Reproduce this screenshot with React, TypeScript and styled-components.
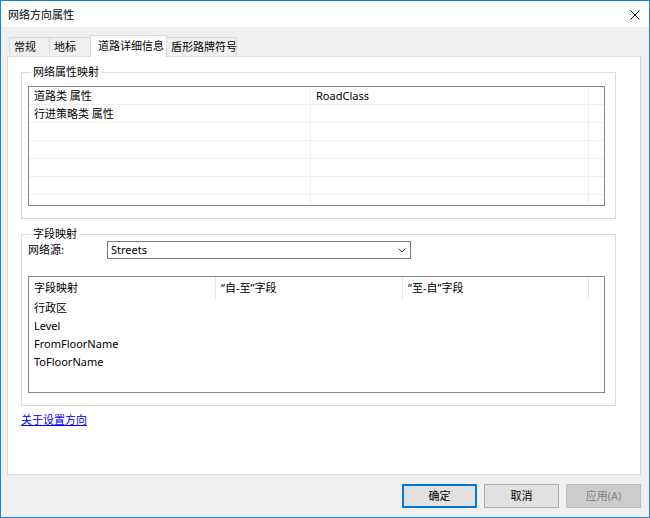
import { Fragment } from "react";
import styled, { createGlobalStyle } from "styled-components";

/* ================= STYLES ================= */

const GlobalStyle = createGlobalStyle`
  html, body {
    margin: 0;
    padding: 0;
    background: #ffffff;
  }
  body {
    font-family: "Noto Sans", "Noto Sans CJK SC", sans-serif;
    font-size: 11px;
    color: #000;
  }
  * {
    box-sizing: border-box;
  }
`;

const Window = styled.div`
  width: 650px;
  height: 518px;
  border: 1px solid #1883d7;
  background: #f0f0f0;
  display: flex;
  flex-direction: column;
`;

const TitleBar = styled.div`
  height: 26px;
  flex-shrink: 0;
  background: #ffffff;
  display: flex;
  align-items: center;
  justify-content: space-between;
  padding: 1px 9px 0 7px;
  line-height: 14px;
`;

const CloseIcon = styled.svg`
  display: block;
`;

const Body = styled.div`
  flex: 1;
  min-height: 0;
  display: flex;
  flex-direction: column;
  padding: 8px 8px 9px 6px;
`;

const TabStrip = styled.div`
  height: 21px;
  flex-shrink: 0;
  display: flex;
  align-items: flex-end;
  padding-left: 2px;
  position: relative;
  z-index: 1;
`;

const Tab = styled.div<{ $active?: boolean; $w: number }>`
  width: ${({ $w }) => $w}px;
  height: ${({ $active }) => ($active ? 22 : 19)}px;
  margin-bottom: ${({ $active }) => ($active ? -1 : 0)}px;
  margin-left: -1px;
  padding: 0 0 ${({ $active }) => ($active ? 2 : 0)}px
    ${({ $active }) => ($active ? 7 : 4)}px;
  border: 1px solid #d9d9d9;
  border-bottom: none;
  background: ${({ $active }) => ($active ? "#ffffff" : "#f0f0f0")};
  display: flex;
  align-items: center;
  line-height: 14px;
  white-space: nowrap;
  position: relative;
  z-index: ${({ $active }) => ($active ? 2 : 1)};

  &:first-child {
    margin-left: 0;
  }
`;

const Panel = styled.div`
  flex: 1;
  min-height: 0;
  background: #ffffff;
  border: 1px solid #d9d9d9;
  padding: 8px 24px 0 13px;
  display: flex;
  flex-direction: column;
`;

const Group = styled.fieldset`
  margin: 0;
  padding: 0 10px 12px 6px;
  border: 1px solid #dcdcdc;
  min-width: 0;

  & + & {
    margin-top: 8px;
  }
`;

const Legend = styled.legend`
  padding: 0 2px;
  margin-left: 3px;
  line-height: 14px;
  height: 14px;
`;

const ListBox = styled.div<{ $h: number; $mt: number }>`
  height: ${({ $h }) => $h}px;
  margin-top: ${({ $mt }) => $mt}px;
  border: 1px solid #828790;
  background: #ffffff;
  overflow: hidden;
`;

const GridTable = styled.div`
  display: grid;
  grid-template-columns: 282px 278px 1fr;
  grid-auto-rows: 18px;
`;

const GridCell = styled.div<{ $last?: boolean }>`
  border-bottom: 1px solid #f0f0f0;
  border-right: ${({ $last }) => ($last ? "none" : "1px solid #f0f0f0")};
  padding-left: 5px;
  display: flex;
  align-items: center;
  line-height: 14px;
  white-space: nowrap;
`;

const HeaderRow = styled.div`
  display: grid;
  grid-template-columns: 187px 187px 186px 1fr;
  height: 22px;
`;

const HeaderCell = styled.div<{ $last?: boolean }>`
  border-right: ${({ $last }) => ($last ? "none" : "1px solid #e5e5e5")};
  padding-left: 5px;
  display: flex;
  align-items: center;
  line-height: 14px;
  white-space: nowrap;
`;

const PlainRow = styled.div`
  height: 18px;
  padding-left: 5px;
  display: flex;
  align-items: center;
  line-height: 14px;
`;

const SourceRow = styled.div`
  height: 18px;
  display: flex;
  align-items: center;
`;

const SourceLabel = styled.span`
  width: 79px;
  line-height: 14px;
`;

const Combo = styled.div`
  width: 304px;
  height: 18px;
  border: 1px solid #7a7a7a;
  background: #ffffff;
  display: flex;
  align-items: center;
  justify-content: space-between;
  padding: 0 4px 0 3px;
  line-height: 14px;
`;

const Link = styled.a`
  align-self: flex-start;
  margin-top: 7px;
  line-height: 14px;
  color: #0000ff;
  text-decoration: underline;
  cursor: pointer;
`;

const Footer = styled.div`
  flex-shrink: 0;
  margin-top: 9px;
  display: flex;
  justify-content: flex-end;
  gap: 7px;
`;

const Button = styled.button<{ $variant?: "default" | "disabled" }>`
  width: 75px;
  height: 24px;
  padding: 0;
  font: inherit;
  font-size: 11px;
  line-height: 14px;
  color: ${({ $variant }) => ($variant === "disabled" ? "#838383" : "#000")};
  background: ${({ $variant }) =>
    $variant === "disabled" ? "#cccccc" : "#e1e1e1"};
  border: ${({ $variant }) =>
    $variant === "default"
      ? "2px solid #0078d7"
      : $variant === "disabled"
        ? "1px solid #bfbfbf"
        : "1px solid #adadad"};
`;

/* ================= DATA ================= */

const tabs = [
  { label: "常规", w: 41 },
  { label: "地标", w: 42 },
  { label: "道路详细信息", w: 77, active: true },
  { label: "盾形路牌符号", w: 71 },
];

const attrRows: [string, string][] = [
  ["道路类 属性", "RoadClass"],
  ["行进策略类 属性", ""],
  ["", ""],
  ["", ""],
  ["", ""],
  ["", ""],
  ["", ""],
];

const fieldRows = ["行政区", "Level", "FromFloorName", "ToFloorName"];

/* ================= COMPONENT ================= */

const App = () => {
  return (
    <>
      <GlobalStyle />
      <Window>
        <TitleBar>
          <span>网络方向属性</span>
          <CloseIcon width="10" height="10" viewBox="0 0 10 10">
            <path d="M0.5 0.5 L9.5 9.5 M9.5 0.5 L0.5 9.5" stroke="#000" strokeWidth="1" fill="none" />
          </CloseIcon>
        </TitleBar>

        <Body>
          <TabStrip>
            {tabs.map((t) => (
              <Tab key={t.label} $w={t.w} $active={t.active}>
                {t.label}
              </Tab>
            ))}
          </TabStrip>

          <Panel>
            <Group>
              <Legend>网络属性映射</Legend>
              <ListBox $h={120} $mt={7}>
                <GridTable>
                  {attrRows.map(([a, b], i) => (
                    <Fragment key={i}>
                      <GridCell>{a}</GridCell>
                      <GridCell>{b}</GridCell>
                      <GridCell $last />
                    </Fragment>
                  ))}
                </GridTable>
              </ListBox>
            </Group>

            <Group>
              <Legend>字段映射</Legend>
              <SourceRow>
                <SourceLabel>网络源:</SourceLabel>
                <Combo>
                  <span>Streets</span>
                  <svg width="8" height="5" viewBox="0 0 8 5">
                    <polyline points="0.5,0.5 4,4 7.5,0.5" stroke="#444" strokeWidth="1" fill="none" />
                  </svg>
                </Combo>
              </SourceRow>
              <ListBox $h={117} $mt={17}>
                <HeaderRow>
                  <HeaderCell>字段映射</HeaderCell>
                  <HeaderCell>“自-至”字段</HeaderCell>
                  <HeaderCell>“至-自”字段</HeaderCell>
                  <HeaderCell $last />
                </HeaderRow>
                {fieldRows.map((r) => (
                  <PlainRow key={r}>{r}</PlainRow>
                ))}
              </ListBox>
            </Group>

            <Link>关于设置方向</Link>
          </Panel>

          <Footer>
            <Button $variant="default">确定</Button>
            <Button>取消</Button>
            <Button $variant="disabled">应用(A)</Button>
          </Footer>
        </Body>
      </Window>
    </>
  );
};

export default App;
